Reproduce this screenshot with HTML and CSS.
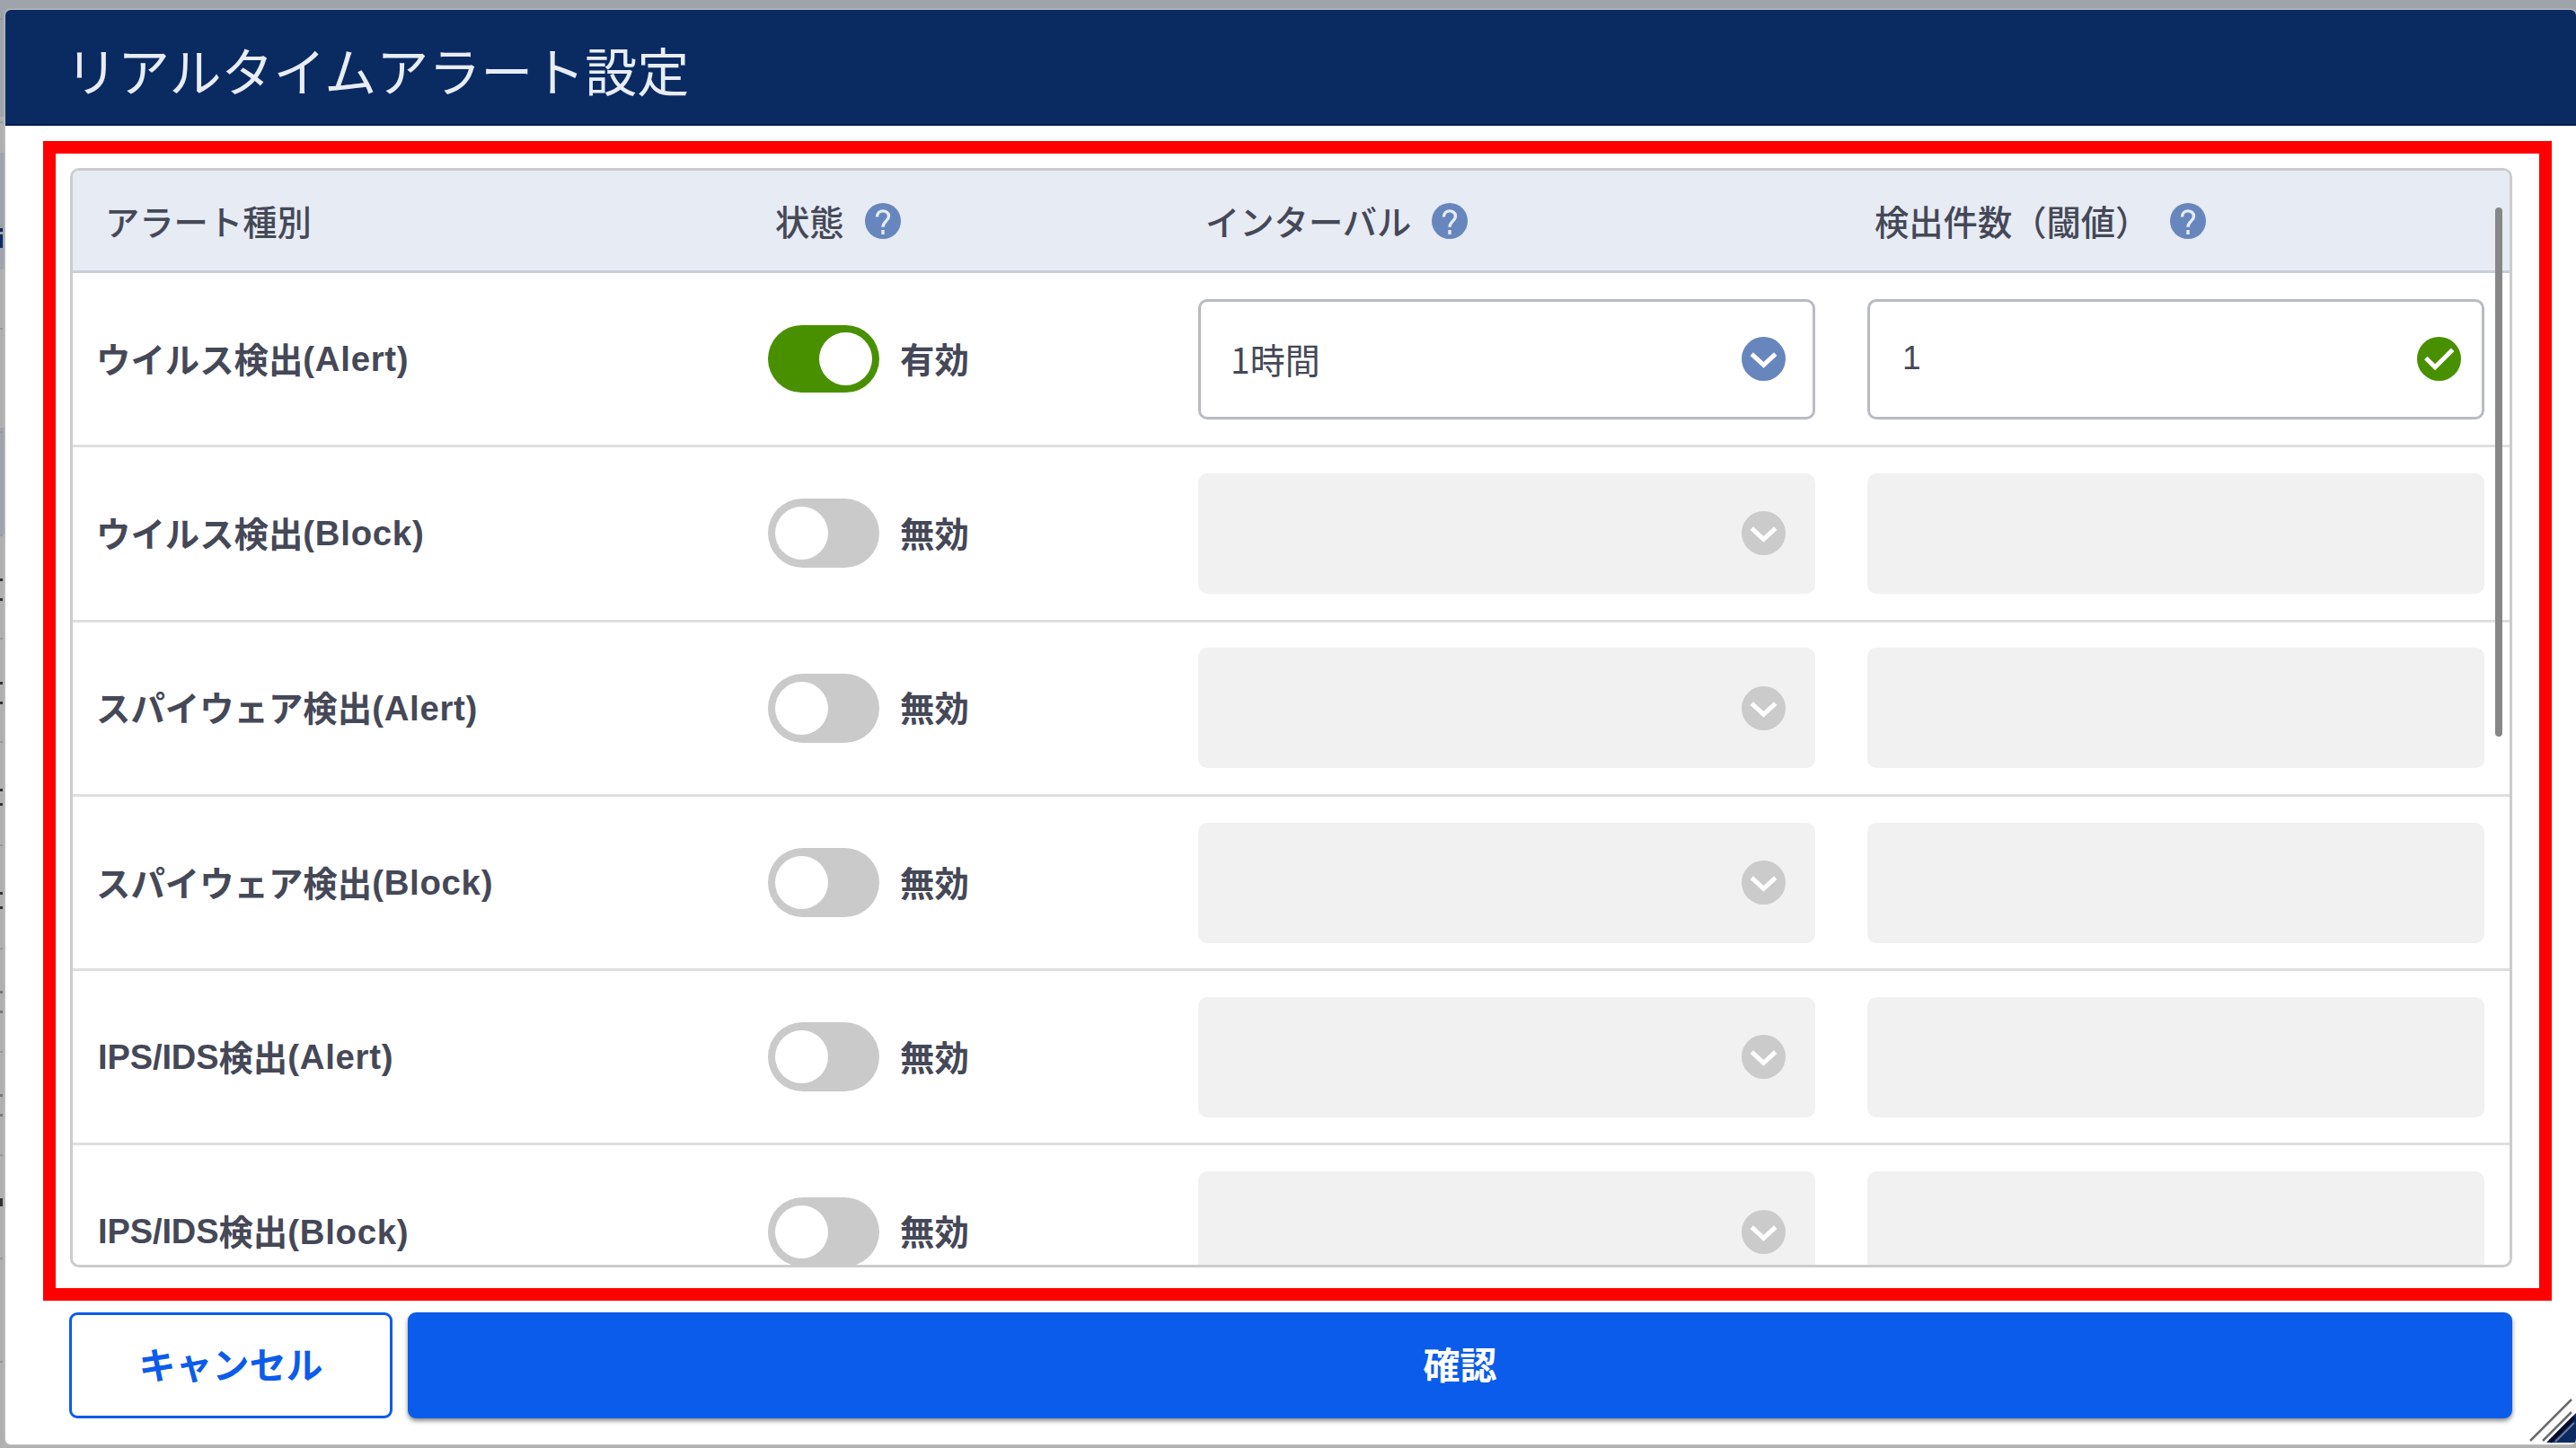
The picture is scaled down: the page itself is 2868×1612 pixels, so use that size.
FILE: index.html
```
<!DOCTYPE html>
<html lang="ja">
<head>
    <meta charset="UTF-8">
    <meta name="viewport" content="width=device-width, initial-scale=1.0">
    <title>リアルタイムアラート設定</title>
    <link rel="stylesheet" href="styles.css">
</head>
<body>
    <svg class="sprite" width="0" height="0">
        <symbol id="help" viewBox="0 0 40 40">
            <circle cx="20" cy="20" r="20" fill="#6786bd"/>
            <path d="M13.500 15.500c0-9 13-8.500 13-.8 0 5-6.500 6-6.500 12" fill="none" stroke="#e7ebf4" stroke-width="3.400"/>
            <rect x="18.300" y="30" width="3.400" height="5" fill="#e7ebf4"/>
        </symbol>
        <symbol id="chevron" viewBox="0 0 50 50">
            <circle cx="25" cy="25" r="25" fill="currentColor"/>
            <path d="M11.500 19.500l13.500 12.500 13.500-12.500" fill="none" stroke="#fff" stroke-width="5"/>
        </symbol>
        <symbol id="check" viewBox="0 0 50 50">
            <circle cx="25" cy="25" r="25" fill="#489000"/>
            <path d="M10 24l10.500 10.500 20-20" fill="none" stroke="#fff" stroke-width="5"/>
        </symbol>
    </svg>

    <!-- slice of the page behind the dialog -->
    <div class="behind"></div>

    <div class="dialog">
        <div class="dialog-header">
            <h1>リアルタイムアラート設定</h1>
        </div>

        <div class="highlight">
            <div class="table">
                <div class="row head">
                    <div class="cell">アラート種別</div>
                    <div class="cell">状態<svg class="help"><use href="#help"/></svg></div>
                    <div class="cell wide">インターバル<svg class="help"><use href="#help"/></svg></div>
                    <div class="cell wide">検出件数（閾値）<svg class="help"><use href="#help"/></svg></div>
                </div>
                <div class="row">
                    <div class="cell name">ウイルス検出<span>(Alert)</span></div>
                    <div class="cell state"><i class="toggle on"></i><b>有効</b></div>
                    <div class="cell"><div class="field"><p>1時間</p><svg class="icon"><use href="#chevron"/></svg></div></div>
                    <div class="cell"><div class="field count"><p>1</p><svg class="icon"><use href="#check"/></svg></div></div>
                </div>
                <div class="row">
                    <div class="cell name">ウイルス検出<span>(Block)</span></div>
                    <div class="cell state"><i class="toggle"></i><b>無効</b></div>
                    <div class="cell"><div class="field disabled"><svg class="icon"><use href="#chevron"/></svg></div></div>
                    <div class="cell"><div class="field disabled"></div></div>
                </div>
                <div class="row">
                    <div class="cell name">スパイウェア検出<span>(Alert)</span></div>
                    <div class="cell state"><i class="toggle"></i><b>無効</b></div>
                    <div class="cell"><div class="field disabled"><svg class="icon"><use href="#chevron"/></svg></div></div>
                    <div class="cell"><div class="field disabled"></div></div>
                </div>
                <div class="row">
                    <div class="cell name">スパイウェア検出<span>(Block)</span></div>
                    <div class="cell state"><i class="toggle"></i><b>無効</b></div>
                    <div class="cell"><div class="field disabled"><svg class="icon"><use href="#chevron"/></svg></div></div>
                    <div class="cell"><div class="field disabled"></div></div>
                </div>
                <div class="row">
                    <div class="cell name"><span class="tight">IPS/IDS</span>検出<span>(Alert)</span></div>
                    <div class="cell state"><i class="toggle"></i><b>無効</b></div>
                    <div class="cell"><div class="field disabled"><svg class="icon"><use href="#chevron"/></svg></div></div>
                    <div class="cell"><div class="field disabled"></div></div>
                </div>
                <div class="row">
                    <div class="cell name"><span class="tight">IPS/IDS</span>検出<span>(Block)</span></div>
                    <div class="cell state"><i class="toggle"></i><b>無効</b></div>
                    <div class="cell"><div class="field disabled"><svg class="icon"><use href="#chevron"/></svg></div></div>
                    <div class="cell"><div class="field disabled"></div></div>
                </div>
                <div class="scrollbar"></div>
            </div>
        </div>

        <div class="actions">
            <button class="btn btn-cancel">キャンセル</button>
            <button class="btn btn-ok">確認</button>
        </div>

        <svg class="resize" viewBox="0 0 54 52">
            <path d="M21 51L54 18V51z" fill="#0a2a62"/>
            <path d="M3 49L49 3M17 49L49 17" stroke="#6b6b6b" stroke-width="2.500"/>
            <path d="M25 50L52 23" stroke="#020a24" stroke-width="4"/>
            <path d="M31 50L52 29" stroke="#6f7c98" stroke-width="2"/>
        </svg>
    </div>
</body>
</html>
```
FILE: styles.css
```
:root {
    --navy: #0a2a62;
    --blue: #0b5cea;
    --green: #489000;
    --text: #454857;
    --line: #cccccc;
}

* {
    margin: 0;
    padding: 0;
    box-sizing: border-box;
}

body {
    width: 2868px;
    height: 1612px;
    overflow: hidden;
    position: relative;
    background: linear-gradient(#9fa3ac 130px, #b0b0b0 130px, #b0b0b0 170px, #9fa3ac 170px, #9fa3ac 300px, #b0b0b0 300px, #b0b0b0 476px, #9fa3ac 476px, #9fa3ac 595px, #b0b0b0 595px);
    color: var(--text);
    font-family: "Noto Sans CJK JP", sans-serif;
    padding: 11px 0 4px 6px;
}

.sprite {
    position: absolute;
}

/* edges of the table text that stick out under the dialog */
.behind {
    position: absolute;
    left: 0;
    top: 0;
    width: 3px;
    height: 1612px;
    background:
        linear-gradient(#0a2a62, #0a2a62) 0 254px / 3px 4px no-repeat,
        linear-gradient(#0a2a62, #0a2a62) 0 261px / 3px 15px no-repeat,
        linear-gradient(#333, #333) 0 644px / 3px 3px no-repeat,
        linear-gradient(#333, #333) 0 666px / 3px 3px no-repeat,
        linear-gradient(#333, #333) 0 759px / 3px 3px no-repeat,
        linear-gradient(#333, #333) 0 781px / 3px 3px no-repeat,
        linear-gradient(#333, #333) 0 878px / 3px 3px no-repeat,
        linear-gradient(#333, #333) 0 894px / 3px 3px no-repeat,
        linear-gradient(#333, #333) 0 993px / 3px 3px no-repeat,
        linear-gradient(#333, #333) 0 1009px / 3px 3px no-repeat,
        linear-gradient(#777, #777) 0 1103px / 3px 3px no-repeat,
        linear-gradient(#777, #777) 0 1125px / 3px 3px no-repeat,
        linear-gradient(#777, #777) 0 1218px / 3px 3px no-repeat,
        linear-gradient(#777, #777) 0 1240px / 3px 3px no-repeat,
        linear-gradient(#333, #333) 0 1334px / 3px 9px no-repeat,
        repeating-linear-gradient(transparent 0 20px, #999 20px 22px, transparent 22px 115px);
}

.dialog {
    position: relative;
    height: 1597px;
    background: #fff;
    border-radius: 6px;
    overflow: hidden;
    box-shadow: 0 0 2px 1px #c4c4c0;
}

.dialog-header {
    height: 129px;
    display: flex;
    align-items: center;
    padding: 4px 0 0 67px;
    background: var(--navy);
    border-bottom: 2px solid #001a55;
}

h1 {
    color: #e8edf5;
    font-size: 58px;
    font-weight: 400;
    line-height: 80px;
}

.highlight {
    width: 2793px;
    height: 1291px;
    margin: 17px 0 0 42px;
    padding: 16px 30px 0 16px;
    border: 14px solid #ff0000;
}

.table {
    position: relative;
    height: 1224px;
    border: 3px solid var(--line);
    border-radius: 10px;
    overflow: hidden;
}

.row {
    display: grid;
    grid-template-columns: 746px 507px 745px 715px;
    height: 194.300px;
    border-bottom: 3px solid #dedfe0;
}

.cell {
    display: flex;
    align-items: center;
}

.head {
    height: 114px;
    background: #e6ebf4;
    border-bottom-color: #c9cedb;
    font-size: 38.300px;
    font-weight: 500;
    line-height: 56px;
}

.head .cell {
    padding-left: 36px;
}

.head .wide {
    padding-left: 8px;
}

.help {
    width: 40px;
    height: 40px;
    margin-left: 23px;
}

.name {
    padding: 0 0 4px 26px;
    font-size: 38.400px;
    font-weight: 700;
}

.name span {
    margin-top: 5px;
    font-family: "Liberation Sans", sans-serif;
    letter-spacing: 0.7px;
}

.name .tight {
    margin-left: 2px;
    font-size: 38px;
    letter-spacing: -0.1px;
}

.state {
    padding-left: 28px;
    gap: 23px;
    font-size: 38.400px;
}

.state b {
    padding-bottom: 4px;
}

.toggle {
    width: 124px;
    height: 77px;
    padding: 9px 8px;
    border-radius: 39px;
    background: #cacaca;
}

.toggle::before {
    content: '';
    display: block;
    width: 59px;
    height: 59px;
    border-radius: 50%;
    background: #fff;
}

.toggle.on {
    height: 75px;
    padding: 8px;
    background: var(--green);
}

.toggle.on::before {
    margin-left: 49px;
}

.field {
    width: 687px;
    height: 134px;
    display: flex;
    align-items: center;
    padding: 0 30px 0 33px;
    border: 3px solid #b9bbc3;
    border-radius: 10px;
    font-size: 39px;
}

.field p {
    padding-bottom: 2px;
}

.count {
    padding-left: 36px;
    padding-right: 23px;
    font-family: "Liberation Sans", sans-serif;
    font-size: 37px;
}

.icon {
    width: 49px;
    height: 49px;
    margin-left: auto;
    color: #6786bd;
}

.disabled {
    background: #f1f1f1;
    border-color: #f1f1f1;
}

.disabled .icon {
    color: #cbcbcb;
}

.scrollbar {
    position: absolute;
    right: 8px;
    top: 41px;
    width: 8px;
    height: 589px;
    border-radius: 4px;
    background: #878787;
}

.actions {
    display: flex;
    gap: 17px;
    padding: 13px 71px 0 71px;
}

.btn {
    height: 118px;
    padding-bottom: 7px;
    border: none;
    border-radius: 9px;
    font-family: inherit;
    font-size: 41px;
    font-weight: 700;
}

.btn-cancel {
    width: 360px;
    border: 3px solid var(--blue);
    background: #fff;
    color: var(--blue);
}

.btn-ok {
    flex: 1;
    background: var(--blue);
    color: #fff;
    box-shadow: 0 3px 5px rgba(0, 0, 0, 0.45);
}

.resize {
    position: absolute;
    right: 0;
    bottom: 1px;
    width: 54px;
    height: 52px;
}
```
